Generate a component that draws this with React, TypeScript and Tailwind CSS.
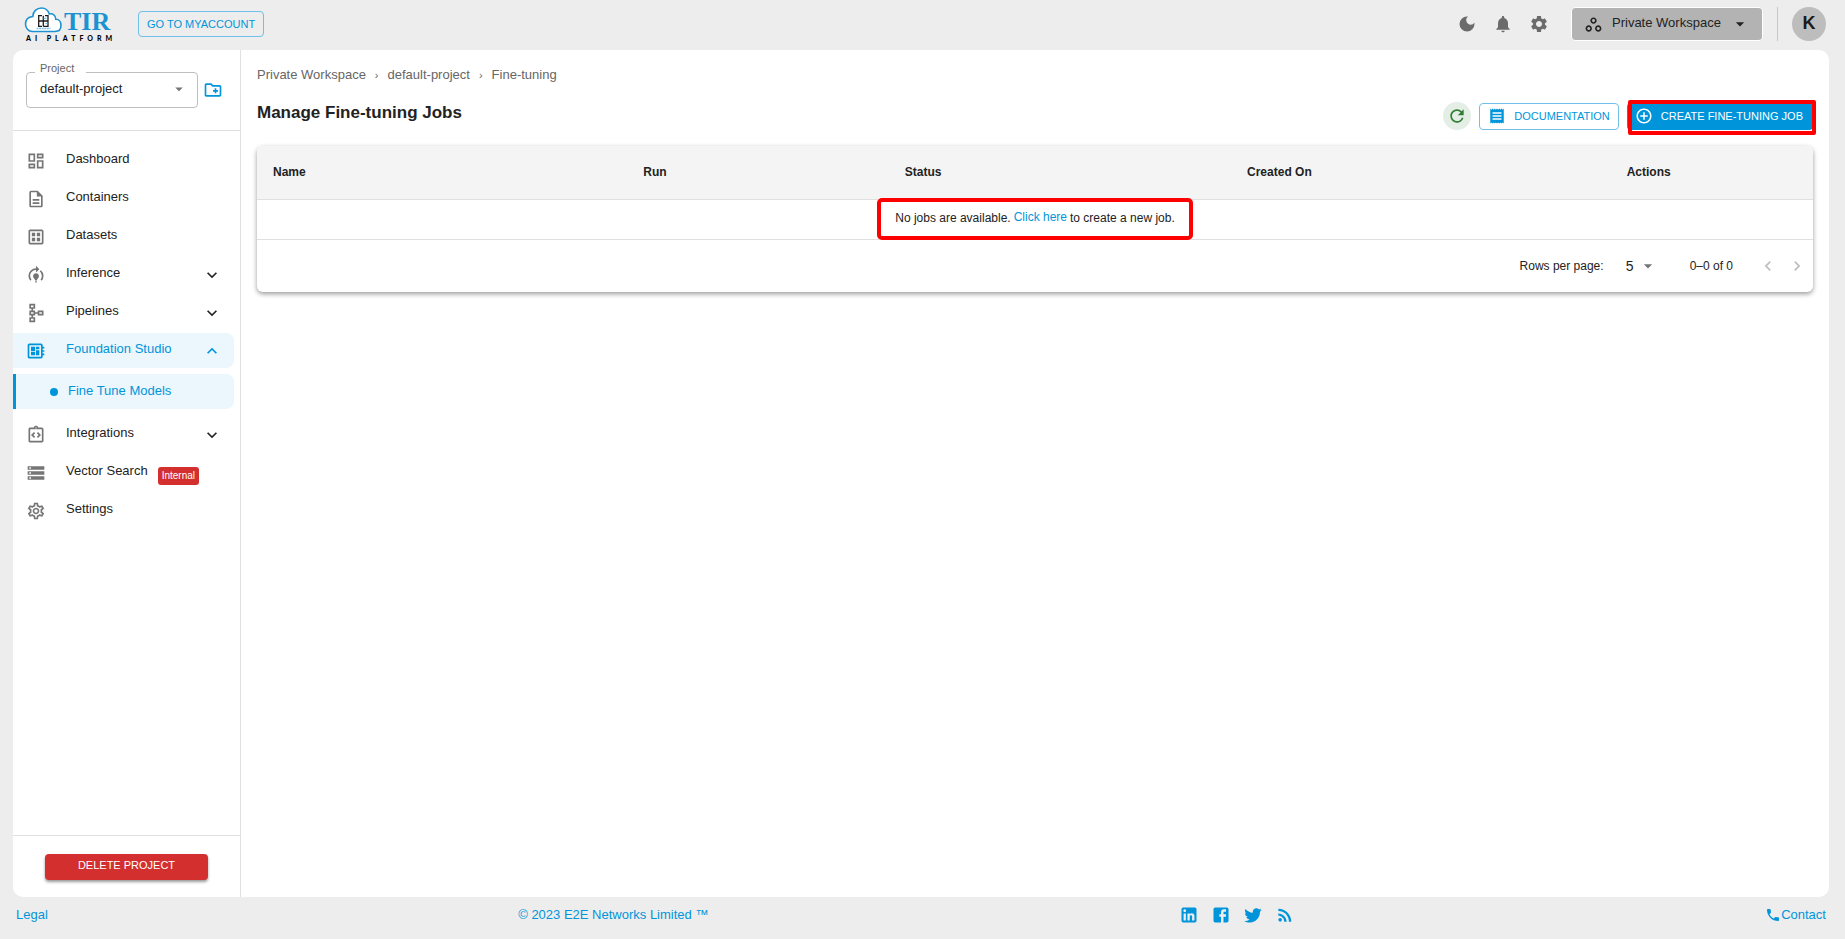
import type { ReactNode } from "react";
import type { IconType } from "react-icons";
import {
  MdAddCircleOutline,
  MdArrowDropDown,
  MdChevronLeft,
  MdChevronRight,
  MdDarkMode,
  MdExpandLess,
  MdExpandMore,
  MdModelTraining,
  MdNotifications,
  MdOutlineCreateNewFolder,
  MdOutlineDashboard,
  MdOutlineDataset,
  MdOutlineDescription,
  MdOutlineDeveloperBoard,
  MdOutlineIntegrationInstructions,
  MdOutlineSchema,
  MdOutlineSettings,
  MdOutlineWorkspaces,
  MdPhone,
  MdReceipt,
  MdRefresh,
  MdRssFeed,
  MdSettings,
  MdStorage,
} from "react-icons/md";
import clsx from "clsx";

const SOCIAL_PATHS = {
  LinkedIn:
    "M19 3a2 2 0 0 1 2 2v14a2 2 0 0 1-2 2H5a2 2 0 0 1-2-2V5a2 2 0 0 1 2-2h14m-.5 15.5v-5.3a3.26 3.26 0 0 0-3.26-3.26c-.85 0-1.84.52-2.32 1.3v-1.11h-2.79v8.37h2.79v-4.93c0-.77.62-1.4 1.39-1.4a1.4 1.4 0 0 1 1.4 1.4v4.93h2.79M6.88 8.56a1.68 1.68 0 0 0 1.68-1.68c0-.93-.75-1.69-1.68-1.69a1.69 1.69 0 0 0-1.69 1.69c0 .93.76 1.68 1.69 1.68m1.39 9.94v-8.37H5.5v8.37h2.77z",
  Facebook:
    "M5 3h14a2 2 0 0 1 2 2v14a2 2 0 0 1-2 2H5a2 2 0 0 1-2-2V5a2 2 0 0 1 2-2m13 2h-2.5A3.5 3.5 0 0 0 12 8.5V11h-2v3h2v7h3v-7h3v-3h-3V9a1 1 0 0 1 1-1h2V5z",
  Twitter:
    "M22.46 6c-.77.35-1.6.58-2.46.69.88-.53 1.56-1.37 1.88-2.38-.83.5-1.75.85-2.72 1.05C18.37 4.5 17.26 4 16 4c-2.35 0-4.27 1.92-4.27 4.29 0 .34.04.67.11.98C8.28 9.09 5.11 7.38 3 4.79c-.37.63-.58 1.37-.58 2.15 0 1.49.75 2.81 1.91 3.56-.71 0-1.37-.2-1.95-.5v.03c0 2.08 1.48 3.82 3.44 4.21a4.22 4.22 0 0 1-1.93.07 4.28 4.28 0 0 0 4 2.98 8.521 8.521 0 0 1-5.33 1.84c-.34 0-.68-.02-1.02-.06C3.44 20.29 5.7 21 8.12 21 16 21 20.33 14.46 20.33 8.79c0-.19 0-.37-.01-.56.84-.6 1.56-1.36 2.14-2.23z",
};

interface NavItem {
  label: string;
  icon: IconType;
  expandable?: boolean;
  active?: boolean;
  badge?: string;
  children?: string[];
}

const NAV_ITEMS: NavItem[] = [
  { label: "Dashboard", icon: MdOutlineDashboard },
  { label: "Containers", icon: MdOutlineDescription },
  { label: "Datasets", icon: MdOutlineDataset },
  { label: "Inference", icon: MdModelTraining, expandable: true },
  { label: "Pipelines", icon: MdOutlineSchema, expandable: true },
  {
    label: "Foundation Studio",
    icon: MdOutlineDeveloperBoard,
    expandable: true,
    active: true,
    children: ["Fine Tune Models"],
  },
  { label: "Integrations", icon: MdOutlineIntegrationInstructions, expandable: true },
  { label: "Vector Search", icon: MdStorage, badge: "Internal" },
  { label: "Settings", icon: MdOutlineSettings },
];

const COLUMNS = [
  { label: "Name", width: "w-[23.8%]" },
  { label: "Run", width: "w-[16.8%]" },
  { label: "Status", width: "w-[22%]" },
  { label: "Created On", width: "w-[24.4%]" },
  { label: "Actions", width: "w-[13%]" },
];

const Logo = () => (
  <a href="#" aria-label="TIR AI Platform" className="block">
    <svg width="98" height="40" viewBox="0 -2 98 40">
      <path
        d="M8.500 25.500H31C35 25.500 37 22.800 37 19.500C37 16 35 13.300 31.800 13.300C32 9.300 28.500 7 25.300 8C24 4 21 2 17.500 2C12.500 2 9 5.500 8.800 10.500C4.300 11 1.500 14 1.500 18C1.500 22 4.300 25.500 8.500 25.500Z"
        fill="#fff"
        stroke="#1c93d1"
        strokeWidth="1.600"
      />
      <path
        d="M18 9.700h-3.300v10.600h3.300M14.700 15h9.300M19.300 9.700v10.600M21 9.700h3v10.600h-4.700"
        fill="none"
        stroke="#1d1d1d"
        strokeWidth="1.300"
      />
      <path d="M19.500 12.300h3M21.500 17.600h2" stroke="#58b4e4" strokeWidth="1" />
      <path d="M12.500 22.600h14" stroke="#7cc3ea" strokeWidth="1.500" strokeDasharray="2 .6" />
      <text x="40" y="24" fontSize="26" className="fill-[#1c93d1] font-['Liberation_Serif',serif] font-bold">
        TIR
      </text>
      <text x="2" y="35" fontSize="7" className="fill-black font-[Lato,sans-serif] font-black tracking-[4px]">
        AI PLATFORM
      </text>
    </svg>
  </a>
);

const IconButton = ({ label, children }: { label: string; children: ReactNode }) => (
  <button type="button" aria-label={label} className="flex size-9 items-center justify-center text-[#6b6b6b]">
    {children}
  </button>
);

const Header = () => (
  <header className="flex h-[50px] items-center justify-between pr-[19px] pb-[2px] pl-6">
    <div className="flex items-center gap-4">
      <Logo />
      <button
        type="button"
        className="h-[26px] rounded-[4px] border border-[#70c0ea] px-2 text-[11px] text-[#0095da]"
      >
        GO TO MYACCOUNT
      </button>
    </div>
    <div className="flex items-center">
      <IconButton label="Dark mode">
        <MdDarkMode size={20} />
      </IconButton>
      <IconButton label="Notifications">
        <MdNotifications size={20} />
      </IconButton>
      <IconButton label="Settings">
        <MdSettings size={20} />
      </IconButton>
      <button
        type="button"
        className="ml-[14px] flex h-[34px] w-[192px] items-center rounded-[4px] border border-white bg-[#b3b3b3] pl-3 text-[13px] text-[#222]"
      >
        <MdOutlineWorkspaces size={19} />
        <span className="ml-[9px] flex-1 pb-[2px] text-left">Private Workspace</span>
        <MdArrowDropDown size={20} className="mr-3" />
      </button>
      <div className="mx-[14px] h-[34px] w-px bg-[#c8c8c8]" />
      <button
        type="button"
        aria-label="Account"
        className="size-[34px] rounded-full bg-[#bdbdbd] pb-[2px] text-lg leading-none font-bold text-[#1a1a1a]"
      >
        K
      </button>
    </div>
  </header>
);

const ProjectPicker = () => (
  <div className="flex h-[81px] items-center gap-[5px] border-b border-[#e0e0e0] pl-[13px]">
    <div className="relative">
      <label htmlFor="project" className="absolute -top-3 left-[9px] w-[51px] bg-white px-[5px] text-[11px] text-[#666]">
        Project
      </label>
      <select
        id="project"
        className="h-9 w-[172px] appearance-none rounded-[4px] border border-[#bfbfbf] bg-white pb-[2px] pl-[13px] text-[13px] text-[#222]"
      >
        <option>default-project</option>
      </select>
      <MdArrowDropDown size={18} className="pointer-events-none absolute top-2 right-[10px] text-[#757575]" />
    </div>
    <button type="button" aria-label="Create project" className="text-[#0095da]">
      <MdOutlineCreateNewFolder size={20} />
    </button>
  </div>
);

const NavRow = ({ item }: { item: NavItem }) => {
  const Icon = item.icon;
  const Chevron = item.active ? MdExpandLess : MdExpandMore;

  return (
    <li className="flex flex-col gap-[6px]">
      <a
        href="#"
        className={clsx(
          "mr-[6px] flex h-[35px] items-center rounded-r-[8px] pr-3 pl-[13px] text-[13px]",
          item.active ? "bg-[#ebf6fd] text-[#0095da]" : "text-[#222]",
        )}
      >
        <Icon size={20} className={item.active ? undefined : "text-[#757575]"} />
        <span className="ml-5 pb-[3px]">{item.label}</span>
        {item.badge && (
          <span className="mt-[6px] ml-[10px] rounded-[3px] bg-[#d32f2f] px-1 text-[10px] leading-[18px] text-white">
            {item.badge}
          </span>
        )}
        {item.expandable && <Chevron size={20} className="ml-auto" />}
      </a>
      {item.children && (
        <ul className="pb-[5px]">
          {item.children.map((child) => (
            <li key={child}>
              <a
                href="#"
                className="mr-[6px] flex h-[35px] items-center gap-[10px] rounded-r-[8px] border-l-[3px] border-[#0095da] bg-[#ebf6fd] pl-[34px] text-[13px] text-[#0095da]"
              >
                <span className="size-2 rounded-full bg-[#0095da]" />
                <span className="pb-[2px]">{child}</span>
              </a>
            </li>
          ))}
        </ul>
      )}
    </li>
  );
};

const Sidebar = () => (
  <aside className="flex w-[228px] shrink-0 flex-col border-r border-[#e0e0e0]">
    <ProjectPicker />
    <nav className="flex-1 pt-3">
      <ul className="flex flex-col gap-[3px]">
        {NAV_ITEMS.map((item) => (
          <NavRow key={item.label} item={item} />
        ))}
      </ul>
    </nav>
    <div className="border-t border-[#e0e0e0] px-8 pt-4 pb-[17px]">
      <button
        type="button"
        className="h-[26px] w-full rounded-[4px] bg-[#d32f2f] pb-1 text-[11px] text-white shadow-[0_2px_3px_rgba(0,0,0,0.4)]"
      >
        DELETE PROJECT
      </button>
    </div>
  </aside>
);

const Breadcrumbs = () => (
  <nav aria-label="Breadcrumb" className="flex items-center gap-[9px] text-[13px] leading-5 text-[#666]">
    <a href="#">Private Workspace</a>
    <span className="text-[11px]">›</span>
    <a href="#">default-project</a>
    <span className="text-[11px]">›</span>
    <a href="#">Fine-tuning</a>
  </nav>
);

const JobsTable = () => (
  <div className="mt-4 rounded-[6px] bg-white shadow-[0_2px_5px_rgba(0,0,0,0.4)]">
    <table className="w-full table-fixed text-xs text-[#222]">
      <thead>
        <tr className="h-[53px] border-b border-[#e0e0e0] bg-[#f4f4f4]">
          {COLUMNS.map((column) => (
            <th
              key={column.label}
              className={clsx(column.width, "px-4 text-left font-bold first:rounded-tl-[6px] last:rounded-tr-[6px]")}
            >
              {column.label}
            </th>
          ))}
        </tr>
      </thead>
      <tbody>
        <tr className="h-10 border-b border-[#e0e0e0]">
          <td colSpan={COLUMNS.length}>
            <div className="mx-auto flex h-[34px] w-[308px] items-center justify-center gap-[3px] rounded-[1px] pb-[2px] outline-4 outline-[#f00]">
              <span>No jobs are available.</span>
              <a href="#" className="pb-[3px] text-[#0095da]">
                Click here
              </a>
              <span>to create a new job.</span>
            </div>
          </td>
        </tr>
      </tbody>
    </table>
    <div className="flex h-[52px] items-center justify-end pr-[2px] text-xs text-[#222]">
      <label htmlFor="rows">Rows per page:</label>
      <div className="relative ml-[22px]">
        <select id="rows" className="block w-9 appearance-none bg-transparent text-sm">
          <option>5</option>
        </select>
        <MdArrowDropDown size={20} className="pointer-events-none absolute top-0 right-1 text-[#757575]" />
      </div>
      <span className="ml-7">0–0 of 0</span>
      <button type="button" aria-label="Previous page" disabled className="ml-5 flex size-[29px] items-center justify-center text-[#bdbdbd]">
        <MdChevronLeft size={20} />
      </button>
      <button type="button" aria-label="Next page" disabled className="flex size-[29px] items-center justify-center text-[#bdbdbd]">
        <MdChevronRight size={20} />
      </button>
    </div>
  </div>
);

const Footer = () => (
  <footer className="flex h-[42px] items-center justify-between pr-[19px] pb-[6px] pl-4 text-[13px] text-[#0095da]">
    <a href="#">Legal</a>
    <span>© 2023 E2E Networks Limited ™</span>
    <div className="flex items-center gap-3">
      {Object.entries(SOCIAL_PATHS).map(([name, path]) => (
        <a key={name} href="#" aria-label={name}>
          <svg viewBox="0 0 24 24" className="size-5 fill-current">
            <path d={path} />
          </svg>
        </a>
      ))}
      <a href="#" aria-label="RSS">
        <MdRssFeed size={20} />
      </a>
    </div>
    <a href="#" className="flex items-center">
      <MdPhone size={16} />
      Contact
    </a>
  </footer>
);

export default function App() {
  return (
    <div className="flex min-h-screen flex-col bg-[#ededed] font-['Liberation_Sans',sans-serif]">
      <Header />
      <div className="mr-4 ml-[13px] flex flex-1 rounded-[10px] bg-white">
        <Sidebar />
        <main className="min-w-0 flex-1 px-4 pt-[15px]">
          <Breadcrumbs />
          <div className="mt-[17px] flex items-start justify-between">
            <h1 className="text-[17px] leading-[22px] font-bold text-[#222]">Manage Fine-tuning Jobs</h1>
            <div className="flex items-center gap-2 text-[11px]">
              <button
                type="button"
                aria-label="Refresh"
                className="flex size-7 items-center justify-center rounded-full bg-[#e4eee5] text-[#2e7d32]"
              >
                <MdRefresh size={20} />
              </button>
              <button
                type="button"
                className="flex h-[27px] items-center gap-2 rounded-[4px] border border-[#70c0ea] px-2 text-[#0095da]"
              >
                <MdReceipt size={18} />
                DOCUMENTATION
              </button>
              <button
                type="button"
                className="relative flex h-[27px] items-center gap-2 rounded-[4px] bg-[#0095da] pr-[10px] pl-2 text-white"
              >
                <MdAddCircleOutline size={18} />
                CREATE FINE-TUNING JOB
                <span className="pointer-events-none absolute -top-[3px] -right-[3px] -bottom-[5px] left-px rounded-[2px] border-4 border-[#f00]" />
              </button>
            </div>
          </div>
          <JobsTable />
        </main>
      </div>
      <Footer />
    </div>
  );
}
